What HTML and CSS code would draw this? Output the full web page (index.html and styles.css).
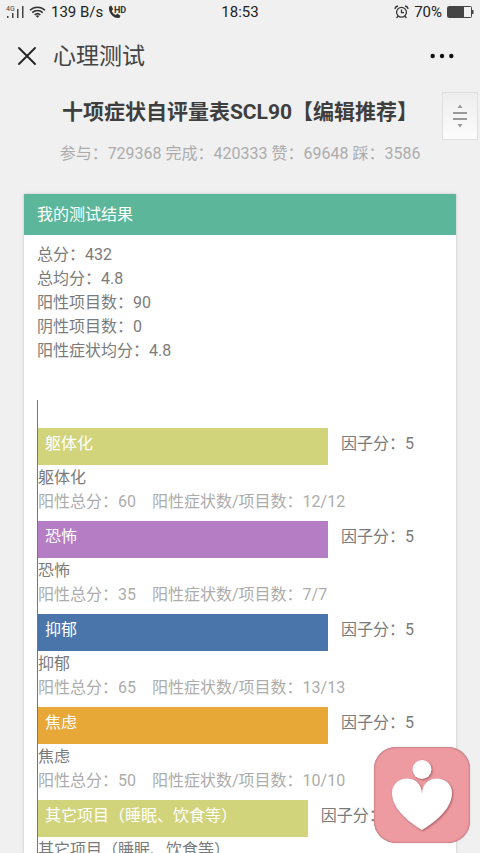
FILE: index.html
```html
<!DOCTYPE html>
<html lang="zh-CN">
<head>
    <meta charset="UTF-8">
    <meta name="viewport" content="width=device-width, initial-scale=1.0">
    <title>心理测试</title>
    <link rel="stylesheet" href="styles.css">
</head>
<body>
    <div class="app">
        <div class="status-bar">
            <div class="status-left">
                <svg width="18" height="14" viewBox="0 0 18 14" fill="#444">
                    <text x="0" y="6" class="signal-text">4G</text>
                    <rect x="1" y="11" width="1.500" height="2"/>
                    <rect x="6" y="8" width="1.500" height="5"/>
                    <rect x="11" y="4" width="1.500" height="9"/>
                    <rect x="16" y="1" width="1.500" height="12"/>
                </svg>
                <svg width="17" height="14" viewBox="0 0 18 14" fill="none" stroke="#333" stroke-width="1.700">
                    <path d="M1 5.200C5.500 .8 12.500 .8 17 5.200M3.500 7.700C6.500 4.700 11.500 4.700 14.500 7.700M6 10.100C7.700 8.500 10.300 8.500 12 10.100"/>
                    <path d="M7.200 11.200Q9 9.900 10.800 11.200L9 13Z" fill="#333" stroke="none"/>
                </svg>
                <span>139 B/s</span>
                <svg width="20" height="14" viewBox="0 0 20 14" fill="#333">
                    <path d="M1.300 1.500L3.200 .6 5.200 4.200 3.700 5.700C4.500 7.800 5.900 9.200 7.900 10L9.300 8.600 12.500 10.800 11.300 12.900C5.500 14.400 -.4 7 1.300 1.500Z"/>
                    <text x="6" y="7.500" class="hd-text">HD</text>
                </svg>
            </div>
            <div class="status-time">18:53</div>
            <div class="status-right">
                <svg width="15" height="14" viewBox="0 0 15 14" fill="none" stroke="#333" stroke-width="1.300">
                    <circle cx="7.500" cy="7.300" r="4.900"/>
                    <path d="M7.500 4.500V7.700H10M1 4C1.200 2.300 2.500 1.200 4 1M11 1C12.500 1.200 13.800 2.300 14 4M4 11.200L2.600 13M11 11.200L12.400 13"/>
                </svg>
                <span>70%</span>
                <svg width="27" height="12" viewBox="0 0 27 12">
                    <rect x=".5" y=".5" width="24" height="11" rx="1" fill="none" stroke="#444"/>
                    <rect x="1" y="1" width="16" height="10" fill="#444"/>
                    <rect x="25" y="4" width="1.500" height="4" fill="#444"/>
                </svg>
            </div>
        </div>

        <header class="nav">
            <button class="nav-btn" aria-label="关闭">
                <svg width="18" height="18" viewBox="0 0 18 18" stroke="#222" stroke-width="1.800" stroke-linecap="round">
                    <path d="M1 1L17 17M17 1L1 17"/>
                </svg>
            </button>
            <div class="nav-title">心理测试</div>
            <button class="nav-btn" aria-label="更多">
                <svg width="24" height="6" viewBox="0 0 24 6" fill="#111">
                    <circle cx="2.700" cy="3" r="2.200"/>
                    <circle cx="12" cy="3" r="2.200"/>
                    <circle cx="21.300" cy="3" r="2.200"/>
                </svg>
            </button>
        </header>

        <main class="page">
            <div class="hero">
                <h1 class="title">十项症状自评量表SCL90【编辑推荐】</h1>
                <p class="meta">参与：729368 完成：420333 赞：69648 踩：3586</p>
                <button class="side-btn" aria-label="展开">
                    <svg width="16" height="24" viewBox="0 0 16 24" fill="#999">
                        <path d="M5.500 4L8 .5 10.500 4ZM5.500 20L8 23.500 10.500 20Z"/>
                        <rect x="1" y="8" width="14" height="2"/>
                        <rect x="1" y="14" width="14" height="2"/>
                    </svg>
                </button>
            </div>

            <section class="card">
                <h2 class="card-header">我的测试结果</h2>
                <div class="card-body">
                    <div class="summary">
                        <p>总分：432</p>
                        <p>总均分：4.8</p>
                        <p>阳性项目数：90</p>
                        <p>阴性项目数：0</p>
                        <p>阳性症状均分：4.8</p>
                    </div>

                    <div class="chart">
                        <div class="factor">
                            <div class="bar-row">
                                <div class="bar olive" style="width: 71.6%">躯体化</div>
                                <span class="score">因子分：5</span>
                            </div>
                            <p class="name">躯体化</p>
                            <p class="detail"><span>阳性总分：60</span><span>阳性症状数/项目数：12/12</span></p>
                        </div>
                        <div class="factor">
                            <div class="bar-row">
                                <div class="bar purple" style="width: 71.6%">恐怖</div>
                                <span class="score">因子分：5</span>
                            </div>
                            <p class="name">恐怖</p>
                            <p class="detail"><span>阳性总分：35</span><span>阳性症状数/项目数：7/7</span></p>
                        </div>
                        <div class="factor">
                            <div class="bar-row">
                                <div class="bar blue" style="width: 71.6%">抑郁</div>
                                <span class="score">因子分：5</span>
                            </div>
                            <p class="name">抑郁</p>
                            <p class="detail"><span>阳性总分：65</span><span>阳性症状数/项目数：13/13</span></p>
                        </div>
                        <div class="factor">
                            <div class="bar-row">
                                <div class="bar orange" style="width: 71.6%">焦虑</div>
                                <span class="score">因子分：5</span>
                            </div>
                            <p class="name">焦虑</p>
                            <p class="detail"><span>阳性总分：50</span><span>阳性症状数/项目数：10/10</span></p>
                        </div>
                        <div class="factor">
                            <div class="bar-row">
                                <div class="bar olive" style="width: 66.6%">其它项目（睡眠、饮食等）</div>
                                <span class="score">因子分：</span>
                            </div>
                            <p class="name">其它项目（睡眠、饮食等）</p>
                        </div>
                    </div>
                </div>
            </section>
        </main>

        <button class="float-btn" aria-label="心理">
            <svg width="96" height="96" viewBox="0 0 96 96">
                <g class="heart">
                    <circle cx="48" cy="22.500" r="9.500"/>
                    <path d="M48 47C48 37 41 31.500 33 31.500C24 31.500 18 38 18 46C18 61 33 74 48 83C63 74 78 61 78 46C78 38 72 31.500 63 31.500C55 31.500 48 37 48 47Z"/>
                </g>
            </svg>
        </button>
    </div>
</body>
</html>
```
FILE: styles.css
```css
* {
    box-sizing: border-box;
}
body, h1, h2, p {
    margin: 0;
}
body {
    font-family: Roboto, 'Noto Sans CJK SC', sans-serif;
    font-size: 16px;
    line-height: 24px;
    color: #7b7b7b;
    background-color: #f0f0f1;
}
button {
    padding: 0;
    border: none;
    background: none;
    font-family: inherit;
    cursor: pointer;
}
svg {
    display: block;
}
.app {
    height: 100vh;
    display: flex;
    flex-direction: column;
    overflow: hidden;
}

/* 状态栏 */
.status-bar {
    display: flex;
    flex-shrink: 0;
    align-items: center;
    height: 24px;
    padding: 0 6px;
    font-size: 15px;
    color: #222;
}
.status-left, .status-right {
    display: flex;
    flex: 1;
    align-items: center;
    gap: 5px;
}
.status-right {
    justify-content: flex-end;
}
.signal-text {
    font-size: 7px;
}
.hd-text {
    font-size: 9px;
    font-weight: bold;
}

/* 导航栏 */
.nav {
    display: flex;
    flex-shrink: 0;
    align-items: center;
    height: 64px;
    padding: 0 26px 0 18px;
}
.nav-title {
    flex: 1;
    padding: 2px 0 0 17px;
    font-size: 23px;
    line-height: 32px;
    color: #444;
}

.page {
    flex: 1;
    min-height: 0;
    overflow-y: auto;
    scrollbar-width: none;
    padding: 0 24px;
}
.hero {
    position: relative;
    padding: 8px 0 28px;
    text-align: center;
}
.title {
    margin-bottom: 14px;
    font-size: 21px;
    line-height: 32px;
    font-weight: bold;
    color: #3e3e3e;
    white-space: nowrap;
}
.meta {
    color: #acacac;
    white-space: nowrap;
}
.side-btn {
    position: absolute;
    top: 4px;
    right: -22px;
    display: flex;
    align-items: center;
    justify-content: center;
    width: 36px;
    height: 48px;
    border: 1px solid #dfdfdf;
    background: linear-gradient(#eeeeee, #fcfcfc);
}

/* 结果卡片 */
.card {
    background-color: #fff;
    box-shadow: 0 0 3px rgba(0, 0, 0, 0.2);
}
.card-header {
    padding: 9px 13px 8px;
    font-size: 16px;
    line-height: 24px;
    font-weight: normal;
    color: #fff;
    background-color: #5cb79a;
}
.card-body {
    padding: 8px 13px;
}
.chart {
    margin-top: 37px;
    padding-top: 28px;
    border-left: 1px solid #777;
}
.factor {
    padding-bottom: 7px;
}
.bar-row {
    display: flex;
    margin-bottom: 1px;
}
.bar {
    flex-shrink: 0;
    padding: 4px 7px 9px;
    color: #fff;
    white-space: nowrap;
}
.score {
    padding-top: 4px;
    margin-left: 13px;
    white-space: nowrap;
}
.detail {
    display: flex;
    gap: 16px;
    color: #acacac;
}
.olive {
    background-color: #d2d47c;
}
.purple {
    background-color: #b57dc4;
}
.blue {
    background-color: #4a75ab;
}
.orange {
    background-color: #e8a838;
}

.float-btn {
    position: fixed;
    right: 10px;
    bottom: 10px;
    border-radius: 22px;
    background-color: #ed9ba1;
    box-shadow: inset 0 0 2px rgba(90, 40, 45, 0.6), 0 0 1px rgba(90, 40, 45, 0.5);
}
.heart {
    fill: #fff;
    filter: drop-shadow(1px 1px 1px rgba(120, 50, 60, 0.6));
}
```
